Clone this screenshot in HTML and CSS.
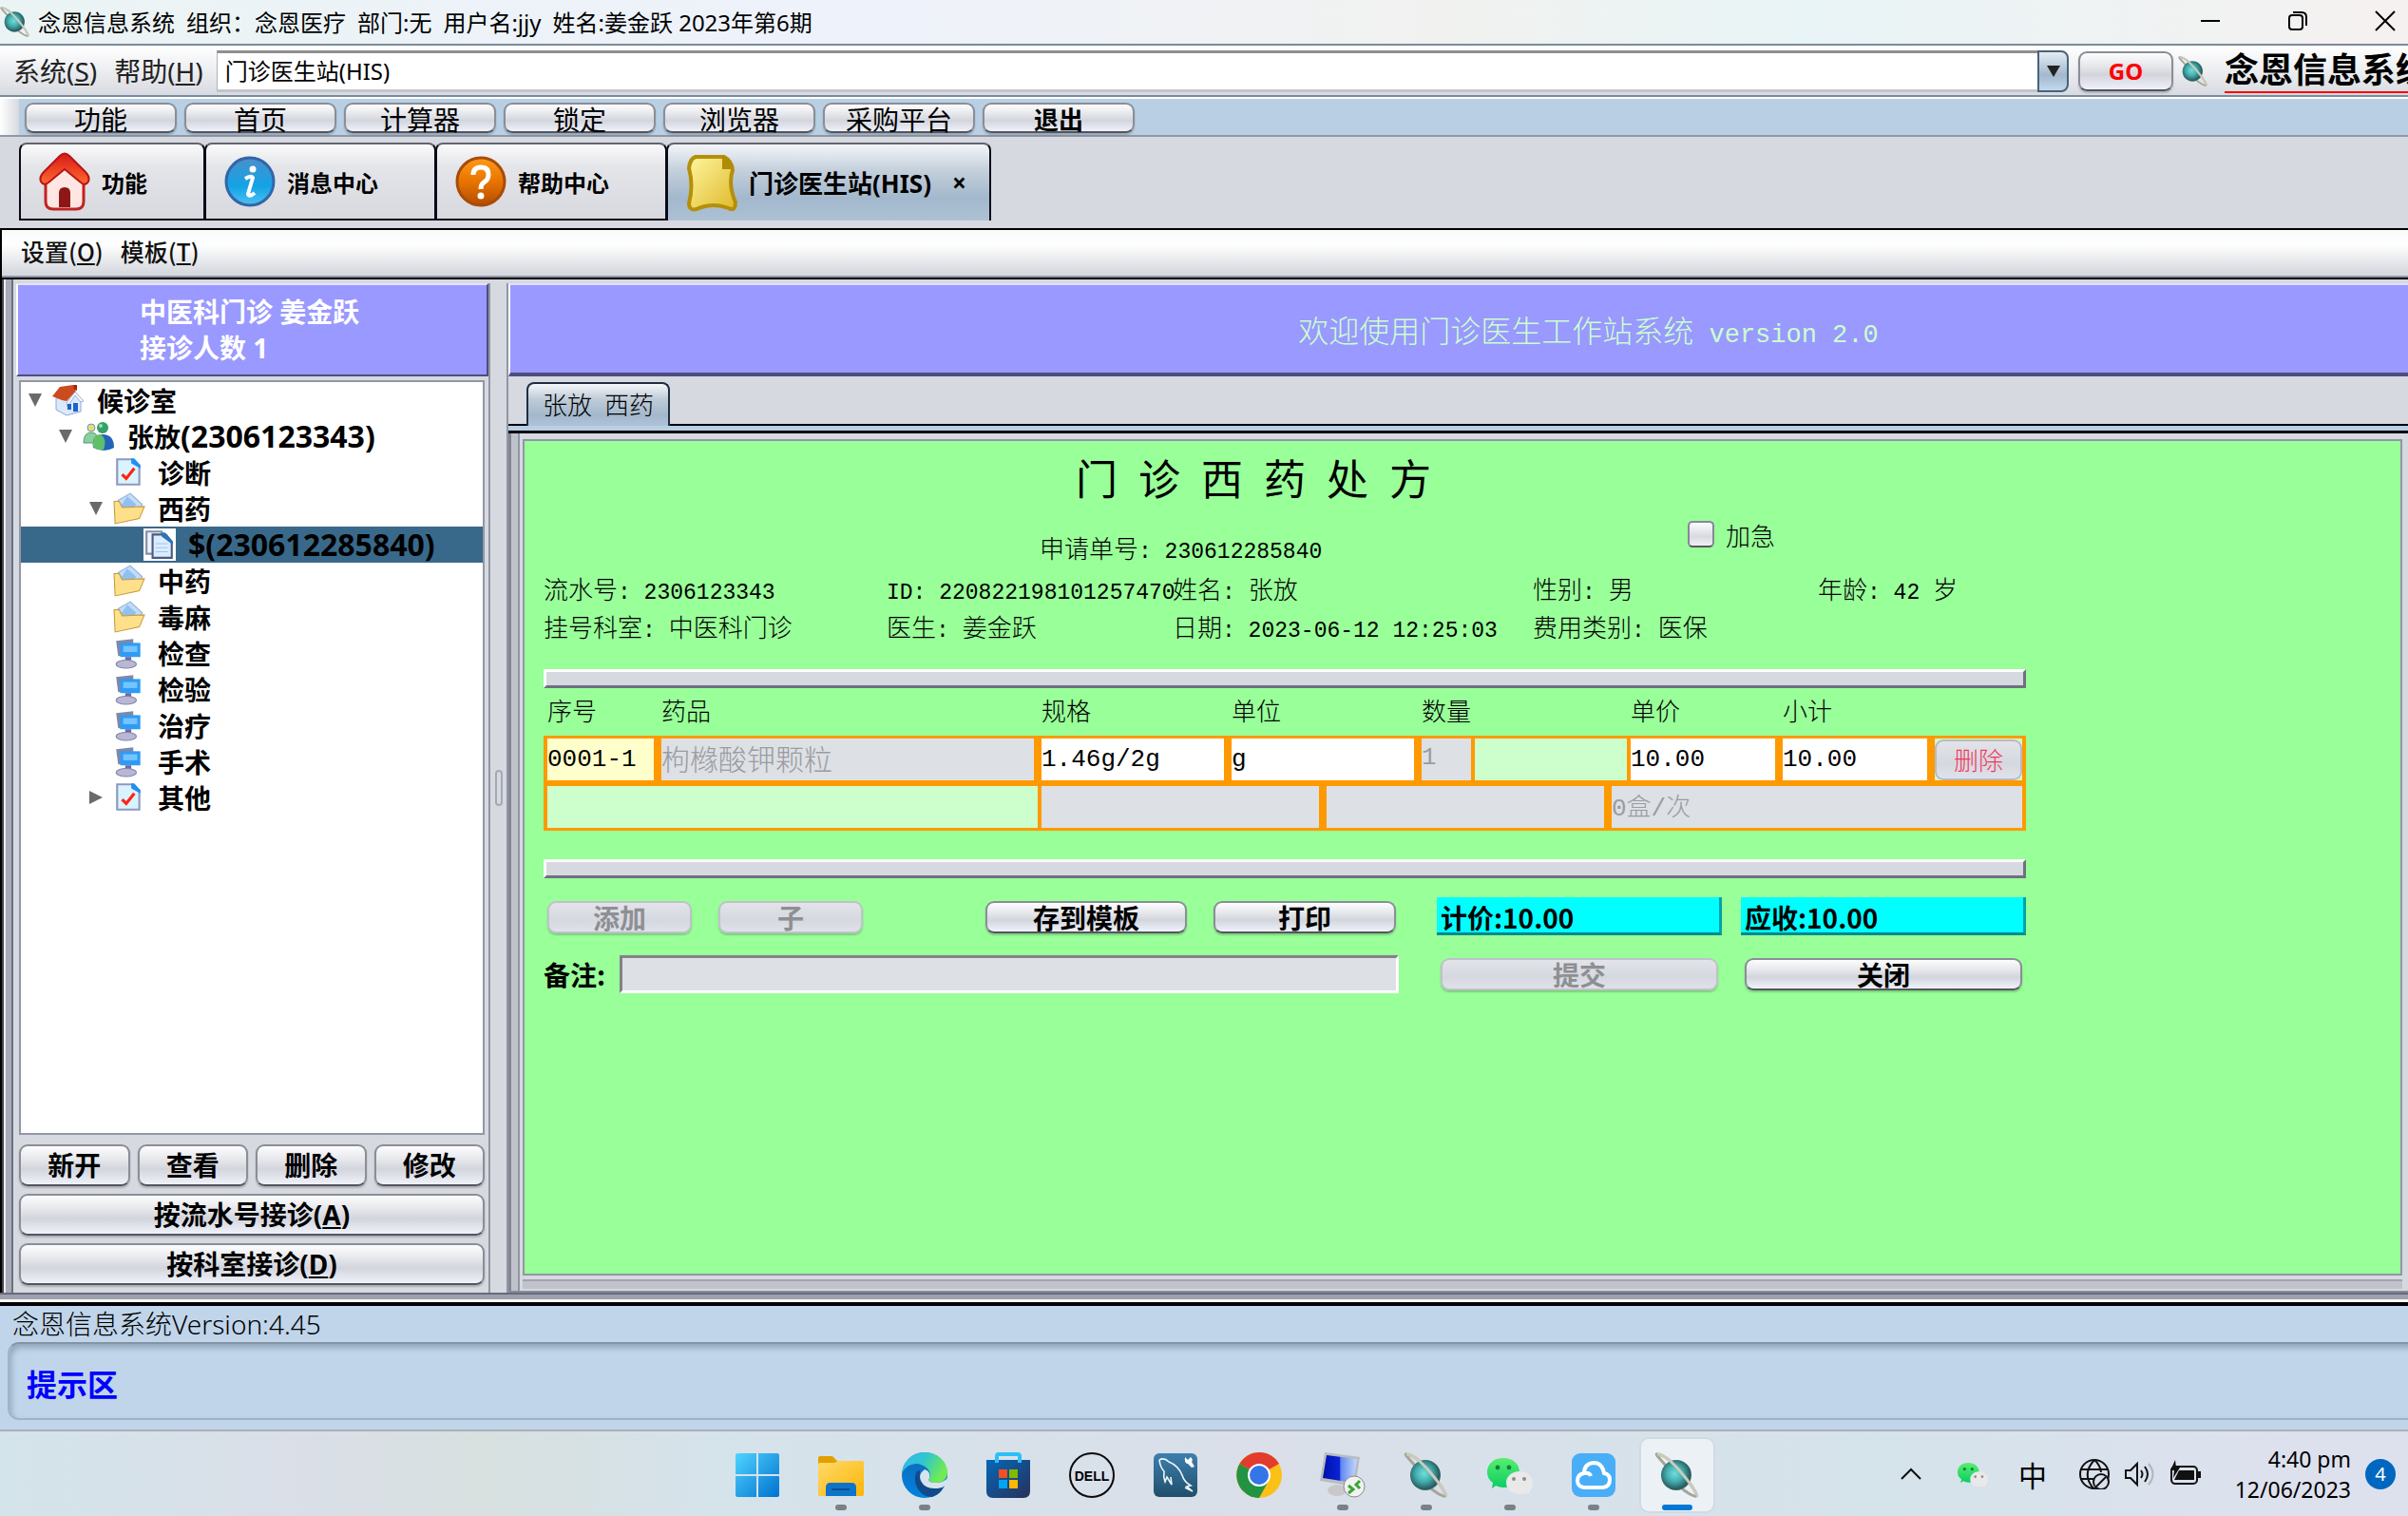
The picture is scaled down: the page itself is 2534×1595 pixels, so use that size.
FILE: index.html
```html
<!DOCTYPE html>
<html lang="zh-CN">
<head>
<meta charset="UTF-8">
<meta name="viewport" content="width=device-width, initial-scale=1.0">
<title>念恩信息系统</title>
<link rel="stylesheet" href="styles.css">
</head>
<body>
    <svg class="sprite" aria-hidden="true">
        <defs>
            <radialGradient id="teal" cx="0.45" cy="0.45" r="0.6">
                <stop offset="0" stop-color="#6fdedd"/>
                <stop offset="0.45" stop-color="#45adae"/>
                <stop offset="0.85" stop-color="#285c5e"/>
                <stop offset="1" stop-color="#5a8484"/>
            </radialGradient>
            <linearGradient id="win" x1="0" y1="0" x2="1" y2="1">
                <stop offset="0" stop-color="#50d4ff"/><stop offset="1" stop-color="#0071cf"/>
            </linearGradient>
            <linearGradient id="folder" x1="0" y1="0" x2="1" y2="1">
                <stop offset="0" stop-color="#ffdb6b"/><stop offset="1" stop-color="#fcb405"/>
            </linearGradient>
            <linearGradient id="edge-top" x1="0" y1="0" x2="1" y2="0.4">
                <stop offset="0" stop-color="#36b5f0"/><stop offset="0.5" stop-color="#2fc6cf"/><stop offset="1" stop-color="#6fec52"/>
            </linearGradient>
            <linearGradient id="edge-low" x1="0" y1="0" x2="0" y2="1">
                <stop offset="0" stop-color="#1067b4"/><stop offset="1" stop-color="#0083e0"/>
            </linearGradient>
            <linearGradient id="store" x1="0" y1="0" x2="1" y2="1">
                <stop offset="0" stop-color="#0667b8"/><stop offset="1" stop-color="#28305a"/>
            </linearGradient>
            <linearGradient id="sea" x1="0" y1="0" x2="0" y2="1">
                <stop offset="0" stop-color="#3e7fae"/><stop offset="1" stop-color="#1f4f6b"/>
            </linearGradient>
            <linearGradient id="screen" x1="0" y1="0" x2="1" y2="0">
                <stop offset="0" stop-color="#0012a8"/><stop offset="0.5" stop-color="#0a22d8"/><stop offset="0.52" stop-color="#5f86f0"/><stop offset="1" stop-color="#c5d8ff"/>
            </linearGradient>
            <linearGradient id="chat" x1="0" y1="0" x2="0" y2="1">
                <stop offset="0" stop-color="#59ee6f"/><stop offset="1" stop-color="#08cd63"/>
            </linearGradient>
            <linearGradient id="roof" x1="0" y1="0" x2="0" y2="1">
                <stop offset="0" stop-color="#d81818"/><stop offset="1" stop-color="#ff6a30"/>
            </linearGradient>
            <linearGradient id="info" x1="0" y1="0" x2="0" y2="1">
                <stop offset="0" stop-color="#4b8fcb"/><stop offset="0.6" stop-color="#12a3e6"/><stop offset="1" stop-color="#4fc0f0"/>
            </linearGradient>
            <linearGradient id="ask" x1="0" y1="0" x2="0" y2="1">
                <stop offset="0" stop-color="#ff9a1a"/><stop offset="0.5" stop-color="#e87400"/><stop offset="1" stop-color="#b44c00"/>
            </linearGradient>
            <linearGradient id="note" x1="0" y1="0" x2="1" y2="1">
                <stop offset="0" stop-color="#fff6a0"/><stop offset="1" stop-color="#dfb92a"/>
            </linearGradient>
        </defs>
        <symbol id="i-planet" viewBox="0 0 48 48">
            <path d="M12 14C5 6 0 1 3 2c6 0 14 6 25 19s18 24 16 25-12-4-18-11" fill="none" stroke="#a5a698" stroke-width="3"/>
            <circle cx="23" cy="24" r="16" fill="url(#teal)"/>
            <path d="M3 2c6 0 14 6 25 19s18 24 16 25" fill="none" stroke="#cbcbbd" stroke-width="3"/>
        </symbol>
        <symbol id="i-house" viewBox="0 0 54 62">
            <path d="M7 28 27 12l20 16v24q0 8-8 8H15q-8 0-8-8z" fill="#ffe6e2" stroke="#c02222" stroke-width="3"/>
            <path d="M21 58V43q0-6 6-6t6 6v15z" fill="#8f1616"/>
            <path d="M2 31Q0 26 5 21L22 4q5-5 10 0l17 17q5 5 3 10-3 5-8 1L27 18 10 32q-5 4-8-1z" fill="url(#roof)" stroke="#b81414" stroke-width="2"/>
        </symbol>
        <symbol id="i-info" viewBox="0 0 54 60">
            <circle cx="27" cy="30" r="25" fill="url(#info)" stroke="#3266a8" stroke-width="3"/>
            <circle cx="30" cy="17" r="3.5" fill="#fff"/>
            <path d="M22 27q7-4 8-1l-5 17q1 4 7-1" fill="none" stroke="#fff" stroke-width="4"/>
        </symbol>
        <symbol id="i-help" viewBox="0 0 54 60">
            <circle cx="27" cy="30" r="25" fill="url(#ask)" stroke="#a84c08" stroke-width="3"/>
            <path d="M19 23q0-8 8-8t8 8q0 5-5 8-3 2-3 7" fill="none" stroke="#fff" stroke-width="5"/>
            <circle cx="27" cy="45" r="3.5" fill="#fff"/>
        </symbol>
        <symbol id="i-note" viewBox="0 0 54 62">
            <path d="M10 4h30q8 4 9 14-5 15 3 34 0 8-5 7-18-8-36 0-8 2-8-6Q8 34 3 16 4 6 10 4z" fill="url(#note)" stroke="#b48f08" stroke-width="4"/>
            <path d="M38 3v14h12q-1-9-12-14z" fill="#b08b08"/>
        </symbol>
        <symbol id="i-home" viewBox="0 0 34 34">
            <path d="M4 15 20 8l10 9v12l-15 4-11-6z" fill="#dbe9fa" stroke="#8aa9d4"/>
            <path d="m15 20 9-12 9 10-3 1-6-7-8 12z" fill="#f3f7fd" stroke="#9db4d8"/>
            <path d="M0 13 8 3l14-2 3 6-10 11-5-1z" fill="#cc4a1e"/><path d="M22 1h4v6l-3-2z" fill="#a8200c"/>
            <path d="M16 21h4v6h-4zm6-1h5v9h-5z" fill="#1f62c8"/>
        </symbol>
        <symbol id="i-people" viewBox="0 0 34 34">
            <circle cx="9" cy="8" r="4" fill="#f0d878" stroke="#58a0b8"/><path d="M1 24q0-11 8-11t7 11z" fill="#8ccf9a" stroke="#4a9a8a"/>
            <circle cx="21" cy="8" r="6" fill="#35a068"/><circle cx="19" cy="6" r="2" fill="#9ce0b0"/>
            <path d="M11 29q-2-14 10-14t12 14q-10 6-22 0z" fill="#2563b8"/><path d="M11 28q-1-13 8-13 7 5 3 16-7 1-11-3z" fill="#5fc06a"/>
        </symbol>
        <symbol id="i-check" viewBox="0 0 32 32">
            <path d="M4 3h15l7 6v19H4z" fill="#d9f4ff" stroke="#8f98c0" stroke-width="2"/><path d="M18 2h3l6 7v3l-9-5z" fill="#1f90f0"/>
            <path d="m9 18 4 4 8-10" fill="none" stroke="#ff2410" stroke-width="3"/>
        </symbol>
        <symbol id="i-folder" viewBox="0 0 32 32">
            <path d="m5 8 12-7 12 11-12 13z" fill="#c3dcf7" stroke="#8fb2dc"/><path d="m14 4 9 8-8 9-7-8z" fill="#8fc0f0"/>
            <path d="M1 9h5l3 6 22-1-5 12-24 5z" fill="#ffe08a" stroke="#c79a3c"/>
        </symbol>
        <symbol id="i-pages" viewBox="0 0 32 32">
            <path d="M3 3h15v22H3z" fill="#eef5ff" stroke="#8090a8" stroke-width="2"/>
            <path d="M9 6h13l6 7v16H9z" fill="#dcecff" stroke="#4a5a80" stroke-width="2"/><path d="M18 4h3l8 9v3L18 8z" fill="#2a74b8"/>
            <path d="M12 15h12M12 19h12M12 23h12" stroke="#9cc4ee"/>
        </symbol>
        <symbol id="i-pc" viewBox="0 0 32 32">
            <path d="m3 4 17-2v16L5 19z" fill="#8088a8"/><path d="M7 6h20v14H7z" fill="#2e9cf4"/><path d="M10 9h14v6H10z" fill="#74c4ff"/>
            <path d="M12 20h6v6h-6z" fill="#7068a8"/><ellipse cx="13" cy="27" rx="10" ry="4" fill="#b8b8d4" stroke="#8484ac"/>
        </symbol>
        <symbol id="i-wechat" viewBox="0 0 48 48">
            <path d="M17 6c10 0 17 6 17 15s-7 16-17 16q-4 0-8-2l-4 3 1-6Q0 28 0 21C0 12 7 6 17 6z" fill="url(#chat)"/>
            <circle cx="11" cy="16" r="2.4" fill="#14823c"/><circle cx="23" cy="16" r="2.4" fill="#14823c"/>
            <path d="M34 20c8 0 14 5 14 12q0 6-4 9l1 3-4-1q-3 1-7 1c-8 0-14-5-14-12s6-12 14-12z" fill="#e9e9ea"/>
            <circle cx="28" cy="28" r="2" fill="#8c8c8c"/><circle cx="39" cy="28" r="2" fill="#8c8c8c"/>
        </symbol>
    </svg>

    <header class="titlebar">
        <svg class="ic-32"><use href="#i-planet"/></svg>
        <span class="caption">念恩信息系统&ensp;组织：念恩医疗&ensp;部门:无&ensp;用户名:jjy&ensp;姓名:姜金跃 2023年第6期</span>
        <button class="win-btn" aria-label="最小化"><svg viewBox="0 0 22 22"><path d="M1 11h20"/></svg></button>
        <button class="win-btn" aria-label="还原"><svg viewBox="0 0 22 22"><rect x="2" y="5" width="14" height="15" rx="3"/><path d="M6 2h9q5 0 5 5v9"/></svg></button>
        <button class="win-btn" aria-label="关闭窗口"><svg viewBox="0 0 22 22"><path d="m1 1 20 20M21 1 1 21"/></svg></button>
    </header>

    <div class="menubar">
        <button class="menu">系统(<u>S</u>)</button>
        <button class="menu">帮助(<u>H</u>)</button>
        <div class="combo">
            <input type="text" value="门诊医生站(HIS)" aria-label="地址">
            <button class="combo-arrow" aria-label="展开"><svg viewBox="0 0 14 12"><path d="M0 0h14L7 12z"/></svg></button>
        </div>
        <button class="nb go">GO</button>
        <svg class="ic-32"><use href="#i-planet"/></svg>
        <span class="brand">念恩信息系统</span>
    </div>

    <nav class="toolbar">
        <button class="nb">功能</button>
        <button class="nb">首页</button>
        <button class="nb">计算器</button>
        <button class="nb">锁定</button>
        <button class="nb">浏览器</button>
        <button class="nb">采购平台</button>
        <button class="nb strong">退出</button>
    </nav>

    <nav class="tabs">
        <button class="tab"><svg><use href="#i-house"/></svg>功能</button>
        <button class="tab"><svg><use href="#i-info"/></svg>消息中心</button>
        <button class="tab"><svg><use href="#i-help"/></svg>帮助中心</button>
        <button class="tab active"><svg><use href="#i-note"/></svg>门诊医生站(HIS)<span class="close">×</span></button>
    </nav>

    <div class="submenu">
        <button class="menu">设置(<u>O</u>)</button>
        <button class="menu">模板(<u>T</u>)</button>
    </div>

    <main class="workspace">
        <aside class="sidebar">
            <div class="doctor">
                <p>中医科门诊 姜金跃<br>接诊人数 1</p>
            </div>
            <ul class="tree">
                <li class="l1"><i class="arrow open"></i><svg><use href="#i-home"/></svg>候诊室</li>
                <li class="l2"><i class="arrow open"></i><svg><use href="#i-people"/></svg>张放<span class="no">(2306123343)</span></li>
                <li class="l3"><i class="arrow"></i><svg><use href="#i-check"/></svg>诊断</li>
                <li class="l3"><i class="arrow open"></i><svg><use href="#i-folder"/></svg>西药</li>
                <li class="l4 selected"><svg><use href="#i-pages"/></svg><span class="no">$(230612285840)</span></li>
                <li class="l3"><i class="arrow"></i><svg><use href="#i-folder"/></svg>中药</li>
                <li class="l3"><i class="arrow"></i><svg><use href="#i-folder"/></svg>毒麻</li>
                <li class="l3"><i class="arrow"></i><svg><use href="#i-pc"/></svg>检查</li>
                <li class="l3"><i class="arrow"></i><svg><use href="#i-pc"/></svg>检验</li>
                <li class="l3"><i class="arrow"></i><svg><use href="#i-pc"/></svg>治疗</li>
                <li class="l3"><i class="arrow"></i><svg><use href="#i-pc"/></svg>手术</li>
                <li class="l3"><i class="arrow shut"></i><svg><use href="#i-check"/></svg>其他</li>
            </ul>
            <div class="actions">
                <button class="nb">新开</button>
                <button class="nb">查看</button>
                <button class="nb">删除</button>
                <button class="nb">修改</button>
                <button class="nb full">按流水号接诊(<u>A</u>)</button>
                <button class="nb full">按科室接诊(<u>D</u>)</button>
            </div>
        </aside>

        <div class="splitter"><i></i></div>

        <section class="content">
            <div class="welcome">欢迎使用门诊医生工作站系统<span class="mono"> version 2.0</span></div>
            <div class="doc-tabs"><button class="doc-tab">张放&ensp;西药</button></div>
            <div class="doc-frame">
                <div class="paper">
                    <form class="sheet">
                        <h1>门&ensp;诊&ensp;西&ensp;药&ensp;处&ensp;方</h1>
                        <div class="order">
                            <span class="order-no">申请单号<b>: 230612285840</b></span>
                            <label class="urgent"><input type="checkbox"> 加急</label>
                        </div>
                        <div class="info">
                            <span>流水号<b>: 2306123343</b></span>
                            <span><b>ID: 220822198101257470</b></span>
                            <span>姓名<b>: </b>张放</span>
                            <span>性别<b>: </b>男</span>
                            <span>年龄<b>: 42 </b>岁</span>
                            <span>挂号科室<b>: </b>中医科门诊</span>
                            <span>医生<b>: </b>姜金跃</span>
                            <span>日期<b>: 2023-06-12 12:25:03</b></span>
                            <span>费用类别<b>: </b>医保</span>
                        </div>
                        <div class="bar"></div>
                        <table class="drugs">
                            <colgroup>
                                <col class="c120"><col class="c400"><col class="c200"><col class="c100"><col class="c100"><col class="c60">
                                <col class="c140"><col class="c20"><col class="c160"><col class="c160"><col class="c100">
                            </colgroup>
                            <thead>
                                <tr>
                                    <th>序号</th><th>药品</th><th>规格</th><th colspan="2">单位</th><th colspan="3">数量</th><th>单价</th><th>小计</th><th></th>
                                </tr>
                            </thead>
                            <tbody>
                                <tr>
                                    <td class="seq"><input value="0001-1" aria-label="序号"></td>
                                    <td class="off"><input value="枸橼酸钾颗粒" disabled aria-label="药品"></td>
                                    <td><input value="1.46g/2g" aria-label="规格"></td>
                                    <td colspan="2"><input value="g" aria-label="单位"></td>
                                    <td class="off small"><input value="1" disabled aria-label="数量"></td>
                                    <td class="blank" colspan="2"></td>
                                    <td><input value="10.00" aria-label="单价"></td>
                                    <td><input value="10.00" aria-label="小计"></td>
                                    <td class="del"><button class="nb" type="button">删除</button></td>
                                </tr>
                                <tr>
                                    <td class="blank first" colspan="2"></td>
                                    <td class="off" colspan="2"><input disabled aria-label="用法"></td>
                                    <td class="off" colspan="3"><input disabled aria-label="频次"></td>
                                    <td class="off small" colspan="4"><input value="0盒/次" disabled aria-label="用量"></td>
                                </tr>
                            </tbody>
                        </table>
                        <div class="bar"></div>
                        <div class="foot">
                            <div class="foot-left">
                                <button class="nb add" type="button" disabled>添加</button>
                                <button class="nb sub" type="button" disabled>子</button>
                                <button class="nb save" type="button">存到模板</button>
                                <button class="nb print" type="button">打印</button>
                            </div>
                            <output class="sum">计价:10.00</output>
                            <output class="sum">应收:10.00</output>
                            <div class="remark">
                                <label for="remark">备注:</label>
                                <input id="remark" type="text" disabled>
                            </div>
                            <button class="nb" type="button" disabled>提交</button>
                            <button class="nb" type="button">关闭</button>
                        </div>
                    </form>
                </div>
            </div>
        </section>
    </main>
    <div class="frame-bottom"></div>

    <footer class="status">
        <p>念恩信息系统Version:4.45</p>
        <div class="hint">提示区</div>
    </footer>

    <div class="taskbar">
        <div class="apps">
            <button class="app" aria-label="开始"><svg viewBox="0 0 48 48"><path d="M1 3q0-2 2-2h20v22H1zM25 1h20q2 0 2 2v20H25zM1 25h22v22H3q-2 0-2-2zM25 25h22v20q0 2-2 2H25z" fill="url(#win)"/></svg></button>
            <button class="app run" aria-label="文件"><svg viewBox="0 0 48 48"><path d="M0 12V6q0-2 2-2h13l5 5h26v10H0z" fill="#e0a000"/><path d="M0 13q0-2 2-2h15l4-2h25q2 0 2 2v33q0 2-2 2H2q-2 0-2-2z" fill="url(#folder)"/><path d="M8 46v-9q0-5 5-5h22q5 0 5 5v9z" fill="#0f74c8"/><path d="M14 39h19" stroke="#0b4f94" stroke-width="2"/></svg></button>
            <button class="app run" aria-label="Edge"><svg viewBox="0 0 48 48"><circle cx="24" cy="24" r="24" fill="url(#edge-low)"/><path d="M0 22C2 8 12 0 24 0c14 0 24 10 24 21 0 8-6 11-12 11-7 0-9-2-7-5 3-8-4-13-12-15Q6 11 0 22z" fill="url(#edge-top)"/><path d="M15 22c-4 11 4 25 17 25q9-3 12-11-9 4-17-1c-6-4-9-9-8-16q-3 0-4 3z" fill="#114a8b"/><path d="M24 18q-7 5-4 12 4 8 14 8 7 0 10-2 4-1 4-9-4 5-12 5c-7 0-9-2-7-5 1-5-1-8-5-9z" fill="#d8e3ed"/></svg></button>
            <button class="app" aria-label="商店"><svg viewBox="0 0 48 48"><path d="M1 8h46v33q0 7-7 7H8q-7 0-7-7z" fill="url(#store)"/><path d="M12 11V4q0-2 2-2h20q2 0 2 2v7" fill="none" stroke="#2cc0f8" stroke-width="4"/><path d="M14 18h9v9h-9z" fill="#f25022"/><path d="M25 18h9v9h-9z" fill="#7fba00"/><path d="M14 29h9v9h-9z" fill="#00a4ef"/><path d="M25 29h9v9h-9z" fill="#ffb900"/></svg></button>
            <button class="app" aria-label="Dell"><svg viewBox="0 0 48 48"><circle cx="24" cy="24" r="23" fill="none" stroke="#0a0a0a" stroke-width="2"/><text class="dell" x="24" y="30" text-anchor="middle">DELL</text></svg></button>
            <button class="app" aria-label="MySQL Workbench"><svg viewBox="0 0 48 48"><rect x="1" y="1" width="46" height="46" rx="6" fill="url(#sea)"/><path d="M7 8q5-3 10 2 10 4 14 14 2 7 9 11l-4 1 6 5-8-4M7 8q1 8 5 12-1 6 1 11l2-5 5 8-1-8" fill="none" stroke="#eef6fa" stroke-width="1.6"/><path d="m34 5 3 3 3-3q3 3 1 5l3 5-3 1-4-4q-4 0-3-7z" fill="#fff"/></svg></button>
            <button class="app" aria-label="Chrome"><svg viewBox="0 0 48 48"><circle cx="24" cy="24" r="24" fill="#fbc116"/><path d="M24 24 3.500 12A24 24 0 0 1 45 12z" fill="#e33b2e"/><path d="M24 24 3.500 12A24 24 0 0 0 24 48l10-18z" fill="#229342"/><circle cx="24" cy="24" r="12" fill="#fff"/><circle cx="24" cy="24" r="10" fill="#3476e8"/></svg></button>
            <button class="app run" aria-label="远程桌面"><svg viewBox="0 0 48 48"><ellipse cx="18" cy="40" rx="10" ry="6" fill="#c8c8ca"/><path d="M5 0 42 5l-5 31L0 30z" fill="#b9bcc0"/><path d="m7 3 32 4-4 25L3 27z" fill="url(#screen)"/><circle cx="36" cy="36" r="11" fill="#f2f2f2" stroke="#8a8a8a"/><path d="m30 35 5 4-5 4M42 30l-4 4 4 4" fill="none" stroke="#3aa635" stroke-width="3"/></svg></button>
            <button class="app run" aria-label="念恩"><svg><use href="#i-planet"/></svg></button>
            <button class="app run" aria-label="微信"><svg><use href="#i-wechat"/></svg></button>
            <button class="app run" aria-label="云盘"><svg viewBox="0 0 48 48"><rect x="1" y="1" width="46" height="46" rx="9" fill="#48aef8"/><path d="M14 37q-7-1-7-7 0-7 7-8 0-10 10-11 9 0 11 11 6 1 6 7 0 7-7 8zM14 22q6-1 7 3" fill="none" stroke="#fff" stroke-width="4"/></svg></button>
            <button class="app current" aria-label="念恩信息系统"><svg><use href="#i-planet"/></svg></button>
        </div>
        <div class="tray">
            <svg class="chev" viewBox="0 0 22 14"><path d="m1 12 10-10 10 10"/></svg>
            <svg class="ic-32"><use href="#i-wechat"/></svg>
            <span class="ime">中</span>
            <svg class="ic-32 line" viewBox="0 0 32 32"><circle cx="16" cy="16" r="15"/><path d="M2 11h28M2 21h14M16 1q-14 15-1 30M16 1q6 5 7 13"/><circle class="cut" cx="23" cy="24" r="8"/><path d="m18 29 10-10"/></svg>
            <svg class="ic-32 line" viewBox="0 0 32 32"><path d="M1 12h5l7-7v22l-7-7H1zM17 12q3 4 0 8M21 8q6 8 0 16"/><path class="faint" d="M25 5q9 11 0 22"/></svg>
            <svg class="ic-32 line" viewBox="0 0 32 32"><rect x="1" y="8" width="27" height="18" rx="4"/><path class="solid" d="M9 12h16v10H4zM29 13h3v7h-3zM5 1 0 12h4l-1 8 7-11H6z"/></svg>
            <p class="clock">4:40 pm<br>12/06/2023</p>
            <span class="badge">4</span>
        </div>
    </div>
</body>
</html>
```
FILE: styles.css
```css
* {
    box-sizing: border-box;
}
body {
    margin: 0;
    min-height: 100vh;
    display: flex;
    flex-direction: column;
    overflow-x: hidden;
    background: #d6d9df;
    color: #000;
    font-family: "Noto Sans", "Noto Sans CJK SC", sans-serif;
    font-size: 28px;
}
button, input {
    font: inherit;
    color: inherit;
    padding: 0;
    border: 0;
    background: none;
}
p, h1, ul {
    margin: 0;
    padding: 0;
}
svg {
    flex: none;
}
/* keeps the gradients usable, takes no room */
.sprite {
    position: absolute;
    width: 0;
    height: 0;
}
.ic-32 {
    width: 32px;
    height: 32px;
}

/* glossy button */
.nb {
    height: 44px;
    line-height: 36px;
    border: 2px solid #8b8e97;
    border-bottom-color: #53565e;
    border-radius: 9px;
    background: linear-gradient(#fdfdfe, #e6e7eb 35%, #d3d5dd 60%, #f0f2fb);
    box-shadow: 0 2px 2px rgba(0, 0, 0, 0.2);
    font-weight: bold;
    white-space: nowrap;
}
.nb:disabled {
    color: #8e8f93;
    border-color: #c0c2ca;
    background: linear-gradient(#e2e4e9, #d5d8df 60%, #dfe2ea);
}

.titlebar {
    height: 48px;
    display: flex;
    align-items: center;
    border-bottom: 2px solid #7a8b9c;
    background: linear-gradient(90deg, #ebf4f4, #eef2fb 35%, #f1f2f0 60%, #e9f4f6 75%, #f5f1f0);
    font-size: 24px;
}
.caption {
    flex: 1;
    padding: 0 0 2px 8px;
    white-space: nowrap;
}
.win-btn {
    width: 92px;
    height: 46px;
}
.win-btn:last-child {
    width: 48px;
    margin-left: 22px;
}
.win-btn svg {
    width: 22px;
    height: 22px;
    fill: none;
    stroke: #000;
    stroke-width: 2;
}

.menubar {
    height: 56px;
    display: flex;
    align-items: center;
    padding-left: 14px;
    border-bottom: 2px solid #fff;
    box-shadow: inset 0 -2px #7a8b9c;
    background: linear-gradient(#fff, #eeeff2 45%, #d6d9df);
}
.menu {
    margin-right: 18px;
    padding-bottom: 2px;
    font-size: 28px;
    color: #222;
    white-space: nowrap;
}
.menubar .menu + .combo {
    margin-left: -4px;
}
.combo {
    flex: 1;
    display: flex;
    height: 44px;
    margin-right: 10px;
}
.combo input {
    flex: 1;
    min-width: 0;
    padding: 0 8px 4px;
    background: #fff;
    border-top: 3px solid #8f8f8f;
    border-bottom: 3px solid #c3c5ca;
    border-left: 1px solid #b0b3ba;
    font-size: 24px;
}
.combo-arrow {
    width: 33px;
    border: 2px solid #47637d;
    border-radius: 0 8px 8px 0;
    background: linear-gradient(#e4ecf4, #a3b8cc 60%, #c3d8ec);
}
.combo-arrow svg {
    display: block;
    width: 14px;
    height: 12px;
    margin: 0 auto;
    fill: #222;
}
.go {
    width: 100px;
    height: 42px;
    margin-right: 5px;
    font-size: 24px;
    color: #f00;
}
.brand {
    width: 193px;
    height: 46px;
    margin-left: 17px;
    line-height: 44px;
    white-space: nowrap;
    border-bottom: 2px solid #f00;
    font-size: 36px;
    font-weight: bold;
}

.toolbar {
    height: 40px;
    display: flex;
    gap: 8px;
    padding: 4px 0 0 26px;
    border-bottom: 2px solid #9296a5;
    background: linear-gradient(90deg, #fff, #d6d9df 20px, #b9d0e4 20px);
}
.toolbar .nb {
    width: 160px;
    height: 32px;
    line-height: 32px;
    font-weight: normal;
}
.toolbar .strong {
    font-size: 26px;
    font-weight: bold;
}

.tabs {
    height: 96px;
    display: flex;
    align-items: flex-start;
    padding: 6px 20px 0;
}
.tab {
    height: 82px;
    display: flex;
    align-items: center;
    gap: 12px;
    padding: 0 59px 0 19px;
    margin-right: -1px;
    border: 2px solid #0a0a18;
    border-top-color: #62656f;
    border-radius: 8px 8px 0 0;
    background: linear-gradient(#fafafb, #e4e5e9 30%, #d8d9df);
    font-size: 24px;
    font-weight: bold;
    white-space: nowrap;
}
.tab.active {
    padding-right: 24px;
    border-bottom: 0;
    background: linear-gradient(#f2f5f8, #c3cfdb 35%, #a3b8cc 70%, #adc1d5);
    font-size: 26px;
}
.tab svg {
    width: 54px;
    height: 62px;
}
.close {
    margin-left: 10px;
}

.submenu {
    height: 54px;
    display: flex;
    align-items: center;
    padding-left: 20px;
    border: solid #000;
    border-width: 2px 0 2px 2px;
    box-shadow: inset 0 -2px #9296a5;
    background: linear-gradient(#f8faf9, #fff 30%, #d6d9df 90%);
}
.submenu .menu {
    padding-bottom: 6px;
    font-size: 25px;
    font-weight: 500;
    color: #111;
    font-family: "Noto Sans CJK SC", sans-serif;
}

.workspace {
    flex: 1;
    display: flex;
    padding: 4px 0 0 14px;
    background: linear-gradient(90deg, #000 2px, #45474d 2px 4px, #eceef0 4px 6px, #a6abb6 6px 12px, #6c7181 12px 14px, #d6d9df 14px);
}
.sidebar {
    width: 502px;
    display: flex;
    flex-direction: column;
    border-right: 2px solid #9296a5;
}
.doctor {
    height: 98px;
    margin-left: 3px;
    padding: 9px 0 0 128px;
    border: 2px solid;
    border-color: #e2e2ff #4d4d80 #4d4d80 #fff;
    background: #99f;
    color: #fff;
    font-weight: bold;
    line-height: 38px;
}
.tree {
    flex: 1;
    margin: 4px 4px 10px 6px;
    border: 2px solid #9296a5;
    background: #fff;
    list-style: none;
    font-weight: bold;
}
.tree li {
    height: 38px;
    display: flex;
    align-items: center;
    white-space: nowrap;
}
.tree svg {
    width: 34px;
    height: 34px;
    margin: 0 13px 0 11px;
}
.l1 { padding-left: 8px; }
.l2 { padding-left: 40px; }
.l3 { padding-left: 72px; }
.l4 { padding-left: 118px; }
.selected {
    background: #39698a;
}
.tree .selected svg {
    background: #fff;
}
.no {
    font-size: 32px;
    line-height: 38px;
}
.arrow {
    width: 14px;
    height: 14px;
}
.arrow.open {
    background: #6a6a6a;
    clip-path: polygon(0 0, 100% 0, 50% 100%);
}
.arrow.shut {
    background: #6a6a6a;
    clip-path: polygon(0 0, 100% 50%, 0 100%);
}
.actions {
    display: grid;
    grid-template-columns: repeat(4, 1fr);
    gap: 8px;
    padding: 0 4px 8px 6px;
}
.full {
    grid-column: 1 / -1;
}
.splitter {
    width: 19px;
    display: flex;
    align-items: center;
    justify-content: center;
    border-right: 2px solid #9296a5;
}
.splitter i {
    width: 8px;
    height: 38px;
    border: 2px solid #a4a9b4;
    border-radius: 4px;
}

.content {
    flex: 1;
    min-width: 0;
    display: flex;
    flex-direction: column;
    font-family: "Noto Sans CJK SC", sans-serif;
    font-weight: 300;
}
.welcome {
    height: 98px;
    padding-left: 272px;
    border-top: 2px solid #dedeff;
    border-left: 2px solid #fff;
    border-bottom: 4px solid #4d4d80;
    background: #99f;
    color: #cfc;
    font-size: 32px;
    line-height: 92px;
    text-align: center;
}
.mono {
    font-family: "Liberation Mono", monospace;
    font-size: 27px;
}
.doc-tabs {
    height: 60px;
    padding: 6px 0 0 19px;
    background: linear-gradient(#d6d9df 50px, #000012 50px 52px, #b9cfe3 52px 57px, #000012 57px);
}
.doc-tab {
    height: 46px;
    padding: 0 15px 4px;
    border: 2px solid #1c2f42;
    border-bottom: 0;
    border-radius: 8px 8px 0 0;
    background: linear-gradient(#f4f7fa, #c0ccd8 35%, #a3b8cc 75%, #aec3d7);
    font-size: 26px;
}
.doc-frame {
    flex: 1;
    display: flex;
    padding: 6px 6px 16px 15px;
    border-bottom: 2px solid #888b95;
    background: linear-gradient(90deg, #838793 3px, #bfc2cb 3px 10px, #9296a5 10px 12px, #d6d9df 12px);
}
.paper {
    flex: 1;
    min-width: 0;
    padding: 6px 20px;
    border: 2px solid #9296a5;
    background: #9f9;
    box-shadow: 0 4px #d6d9df, 0 6px #a1a4b0, 0 14px #c0c3cc;
}
.sheet {
    max-width: 1560px;
}
.sheet h1 {
    padding-left: 560px;
    font-size: 44px;
    line-height: 64px;
    font-weight: 400;
    white-space: nowrap;
}
.order {
    height: 64px;
    display: grid;
    grid-template-columns: 522px 682px 1fr;
    font-size: 26px;
}
.order-no {
    grid-column: 2;
    align-self: end;
    line-height: 34px;
}
.urgent {
    display: flex;
    gap: 12px;
    align-items: center;
    height: 56px;
}
.urgent input {
    appearance: none;
    width: 28px;
    height: 28px;
    margin: 0;
    border: 2px solid #85889a;
    border-bottom-color: #55585f;
    border-radius: 5px;
    background: linear-gradient(#fcfcfd, #d8dae0 60%, #f0f0f6);
}
.order b, .info b {
    font-family: "Liberation Mono", monospace;
    font-size: 23px;
    font-weight: normal;
    white-space: pre;
}
.info {
    display: grid;
    grid-template-columns: 361px 301px 379px 300px 1fr;
    grid-auto-rows: 40px;
    align-items: center;
    padding-bottom: 26px;
    font-size: 26px;
    white-space: nowrap;
}
.bar {
    height: 20px;
    border: 3px solid;
    border-color: #fff #6f7080 #6f7080 #fff;
    background: #d6d9df;
}

.drugs {
    width: 100%;
    table-layout: fixed;
    border-spacing: 0;
    margin-bottom: 30px;
}
.c20 { width: 20px; }
.c60 { width: 60px; }
.c100 { width: 100px; }
.c120 { width: 120px; }
.c140 { width: 140px; }
.c160 { width: 160px; }
.c200 { width: 200px; }
.c400 { width: 400px; }
.drugs th {
    height: 50px;
    padding: 0 0 4px 4px;
    font-size: 26px;
    font-weight: 300;
    line-height: 40px;
    text-align: left;
}
.drugs td {
    height: 50px;
    padding: 0;
    border: 3px solid #f90;
    border-left-width: 4px;
    border-right-width: 4px;
    background: #fff;
}
.drugs td.seq { background: #ffc; }
.drugs td.off { background: #dde0e5; }
.drugs td.blank {
    border-left-width: 0;
    border-right-width: 0;
    background: #cfc;
}
.drugs td.first {
    border-left-width: 4px;
}
.drugs td.del {
    background: #cfc;
}
.drugs input {
    display: block;
    width: 100%;
    height: 42px;
    font-family: "Liberation Mono", "Noto Sans CJK SC", monospace;
    font-size: 26px;
}
.drugs .off input {
    padding-bottom: 4px;
    font-size: 30px;
    font-weight: 300;
    color: #9a9ca0;
}
.drugs .small input {
    font-size: 26px;
}
.drugs .nb {
    display: block;
    width: 100%;
    height: 43px;
    font-size: 26px;
    font-weight: 300;
    color: #f03860;
    border-color: #b8bac4;
    background: linear-gradient(#e2e4e9, #d5d8df 60%, #dfe2ea);
    box-shadow: none;
}

.foot {
    display: grid;
    grid-template-columns: 1fr 300px 300px;
    column-gap: 20px;
    row-gap: 20px;
    padding-top: 20px;
    font-weight: bold;
}
.foot .nb {
    height: 34px;
    line-height: 30px;
    margin: 4px;
}
.foot-left {
    display: flex;
    gap: 20px;
}
.foot-left .nb {
    margin: 4px 4px 0;
}
.add, .sub { width: 152px; }
.save { width: 212px; }
.foot-left .save { margin-left: 105px; }
.print { width: 192px; }
.sum {
    height: 40px;
    padding-left: 4px;
    line-height: 42px;
    border-right: 3px solid #00a3a8;
    border-bottom: 3px solid #008a90;
    background: #0ff;
}
.remark {
    display: flex;
    gap: 14px;
    align-items: center;
    padding-right: 20px;
}
.remark label {
    width: 66px;
    white-space: nowrap;
}
.remark input {
    flex: 1;
    height: 40px;
    border: 3px solid;
    border-color: #85808a #fff #fff #85808a;
    background: #dde0e5;
}
.frame-bottom {
    height: 14px;
    background: linear-gradient(#666b7c 2px, #9ba1ad 2px 7px, #f4f4f4 7px 10px, #000 10px);
}

.status {
    height: 132px;
    border-bottom: 2px solid #acb0b6;
    background: #c0d5ea;
}
.status p {
    padding-left: 13px;
    line-height: 38px;
    font-weight: 300;
}
.hint {
    height: 82px;
    margin: 0 -20px 0 8px;
    padding-left: 18px;
    line-height: 86px;
    border: 2px solid #a3b3c3;
    border-top-color: #8494a4;
    border-radius: 12px;
    box-shadow: inset 2px 4px 6px rgba(60, 80, 100, 0.35);
    color: #00f;
    font-size: 32px;
    font-weight: bold;
}

.taskbar {
    height: 89px;
    display: grid;
    grid-template-columns: 1fr auto 1fr;
    background: linear-gradient(90deg, #d3e4ea, #dadfe8 12%, #d8e0e0 20%, #d5e3eb 30%, #dadfe9 52%, #d5e3ea 78%, #dde1ee 95%);
}
.apps {
    grid-column: 2;
    display: flex;
    gap: 12px;
    padding: 8px 0 5px;
    margin-left: 27px;
}
.app {
    position: relative;
    width: 76px;
    height: 76px;
    border-radius: 8px;
}
.app svg {
    display: block;
    width: 48px;
    height: 48px;
    margin: 0 auto;
}
.run::after, .current::after {
    content: "";
    position: absolute;
    left: 32px;
    bottom: 1px;
    width: 12px;
    height: 6px;
    border-radius: 3px;
    background: #7b8084;
}
.current {
    background: #ecf1f6;
    box-shadow: 0 0 0 2px #d0dae3;
}
.current::after {
    left: 22px;
    width: 32px;
    background: #0078d4;
}
.dell {
    font-family: "Liberation Sans", sans-serif;
    font-size: 14px;
    font-weight: bold;
}
.tray {
    display: flex;
    align-items: center;
    justify-content: flex-end;
    padding-right: 13px;
}
.tray .ic-32 {
    margin-right: 16px;
}
.tray .chev {
    width: 22px;
    height: 14px;
    margin-right: 38px;
    fill: none;
    stroke: #111;
    stroke-width: 2;
}
.tray .chev + .ic-32 {
    margin-right: 32px;
}
.ime {
    width: 30px;
    margin-right: 34px;
    font-size: 30px;
}
.line {
    fill: none;
    stroke: #111;
    stroke-width: 2;
}
.line .cut { fill: #dae1ec; }
.line .faint { stroke: #b0b6c0; }
.line .solid {
    fill: #111;
    stroke: none;
}
.clock {
    width: 142px;
    font-size: 23px;
    line-height: 32px;
    text-align: right;
}
.badge {
    width: 32px;
    height: 32px;
    margin-left: 15px;
    border-radius: 50%;
    background: #0067c0;
    color: #fff;
    font-size: 20px;
    line-height: 32px;
    text-align: center;
}
```
